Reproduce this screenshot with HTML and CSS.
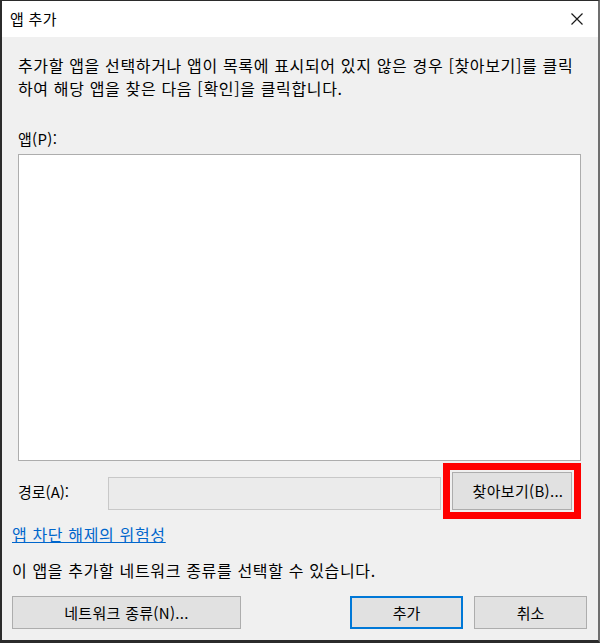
FILE: index.html
```html
<!DOCTYPE html>
<html lang="ko">
<head>
<meta charset="utf-8">
<title>앱 추가</title>
<link rel="stylesheet" href="styles.css">
</head>
<body>
<div class="window">
  <div class="titlebar">
    <span class="title">앱 추가</span>
    <span class="close">
      <svg width="14" height="14" viewBox="0 0 14 14"><path d="M1.5 1.5 L12.5 12.5 M12.5 1.5 L1.5 12.5" stroke="#1a1a1a" stroke-width="1.2" fill="none"/></svg>
    </span>
  </div>
  <div class="content">
    <p class="desc">추가할 앱을 선택하거나 앱이 목록에 표시되어 있지 않은 경우 [찾아보기]를 클릭<br>하여 해당 앱을 찾은 다음 [확인]을 클릭합니다.</p>
    <div class="label">앱(P):</div>
    <div class="listbox"></div>
    <div class="pathrow">
      <span class="pathlabel">경로(A):</span>
      <div class="pathbox"></div>
      <div class="browsewrap">
        <button class="btn browse">찾아보기(B)...</button>
        <div class="highlight"></div>
      </div>
    </div>
    <a class="link" href="#">앱 차단 해제의 위험성</a>
    <p class="info">이 앱을 추가할 네트워크 종류를 선택할 수 있습니다.</p>
    <div class="buttons">
      <button class="btn nettype">네트워크 종류(N)...</button>
      <div class="spacer"></div>
      <button class="btn add">추가</button>
      <button class="btn cancel">취소</button>
    </div>
  </div>
</div>
</body>
</html>
```
FILE: styles.css
```css
* { box-sizing: border-box; }
html, body { margin: 0; padding: 0; background: #ffffff; }
body {
  font-family: "Noto Sans CJK KR", "Noto Sans", sans-serif;
  font-size: 15px;
  color: #000;
}
.window {
  width: 600px;
  height: 643px;
  border-left: 2px solid #2b2b2b;
  border-top: 1px solid #2b2b2b;
  border-bottom: 3px solid #2b2b2b;
  border-right: 2px solid #6f6f6f;
  display: flex;
  flex-direction: column;
  background: #f0f0f0;
}
.titlebar {
  height: 36px;
  background: #ffffff;
  display: flex;
  align-items: center;
  justify-content: space-between;
  padding-left: 8px;
  padding-right: 14px;
  flex: none;
}
.title { font-size: 15px; line-height: 20px; letter-spacing: 0.3px; }
.close { display: flex; width: 14px; height: 14px; }
.content {
  flex: 1;
  display: flex;
  flex-direction: column;
  padding: 17px 14px 0 16px;
}
.desc {
  margin: 0;
  line-height: 23px;
  font-size: 16px;
  letter-spacing: 0.65px;
}
.label {
  margin-top: 27px;
  line-height: 23px;
  letter-spacing: 0.3px;
}
.listbox {
  margin-top: 4px;
  height: 307px;
  width: 563px;
  background: #ffffff;
  border: 1px solid #adadad;
}
.pathrow {
  display: flex;
  align-items: center;
  margin-top: 7px;
  height: 46px;
}
.pathlabel { width: 90px; line-height: 23px; }
.pathbox {
  width: 333px;
  height: 33px;
  background: #ebebeb;
  border: 1px solid #c8c8c8;
  margin-top: 4px;
}
.browsewrap {
  position: relative;
  margin-left: 11px;
  width: 120px;
  height: 38px;
}
.btn {
  font-family: inherit;
  font-size: 15px;
  color: #000;
  background: #e1e1e1;
  border: 1px solid #adadad;
  padding: 0;
  line-height: 20px;
  cursor: default;
}
.browse { width: 120px; height: 38px; padding-left: 12px; letter-spacing: 0.3px; }
.highlight {
  position: absolute;
  left: -9px;
  top: -9px;
  width: 138px;
  height: 56px;
  border: 7px solid #ff0000;
  pointer-events: none;
}
.link {
  margin-top: 9px;
  margin-left: -6px;
  align-self: flex-start;
  color: #0066cc;
  line-height: 23px;
  font-size: 16px;
  letter-spacing: 0.65px;
  text-decoration: underline;
}
.info {
  margin: 13px 0 0 -6px;
  line-height: 23px;
  font-size: 16px;
  letter-spacing: 0.65px;
}
.buttons {
  display: flex;
  margin-top: 14px;
  margin-left: -6px;
  margin-right: -3px;
  height: 33px;
}
.nettype { width: 229px; height: 33px; letter-spacing: 0.3px; }
.spacer { flex: 1; }
.add { width: 113px; height: 33px; border: 2px solid #0078d7; }
.cancel { width: 113px; height: 33px; margin-left: 11px; }
```
